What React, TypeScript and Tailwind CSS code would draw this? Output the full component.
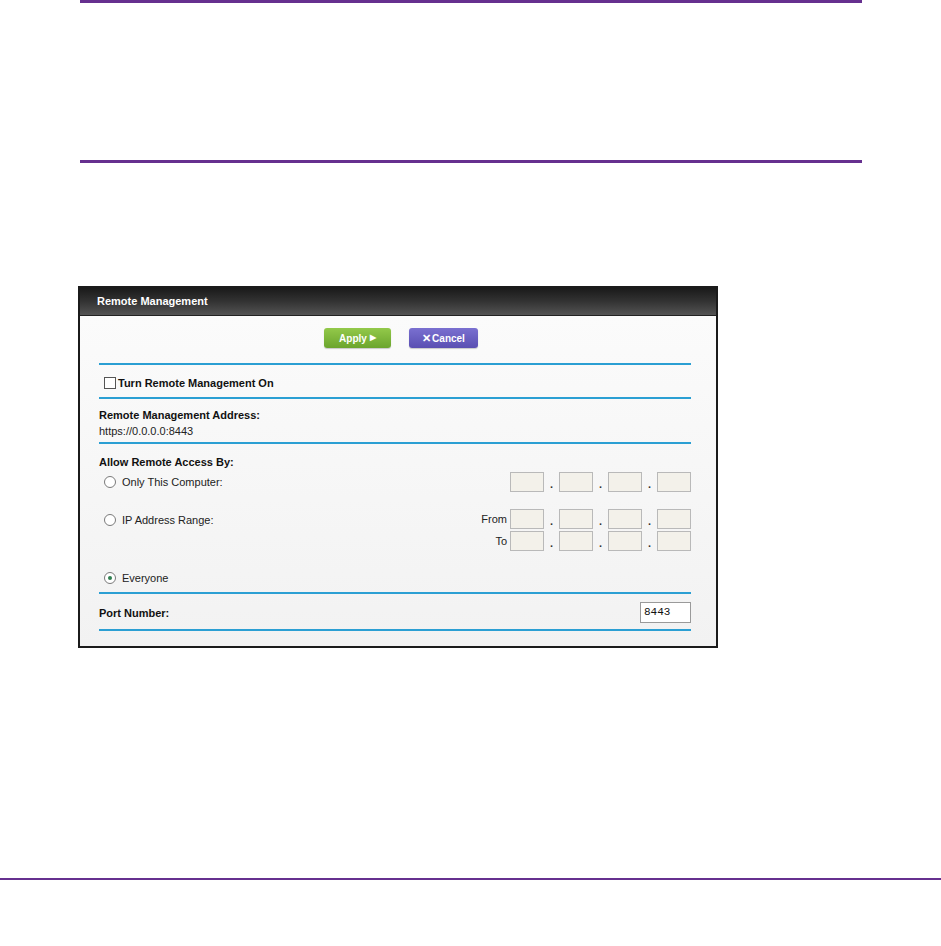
import React from 'react';

const font = { fontFamily: '"Liberation Sans", Arial, sans-serif' };

function Rule() {
  return <div className="h-[2px] bg-[#2b9fd3]" />;
}

function Radio({ checked }: { checked?: boolean }) {
  return (
    <span className="flex h-[12px] w-[12px] items-center justify-center rounded-full border border-[#7a7a7a] bg-white">
      {checked && <span className="h-[4px] w-[4px] rounded-full bg-[#2f7f4f]" />}
    </span>
  );
}

function IpBox() {
  return <div className="h-[20px] w-[34px] border border-[#b9b9b9] bg-[#f3f1ea]" />;
}

function IpRow() {
  return (
    <div className="flex items-center">
      <IpBox />
      <span className="w-[15px] pt-[4px] text-center text-[11px] font-bold leading-none text-[#333]">.</span>
      <IpBox />
      <span className="w-[15px] pt-[4px] text-center text-[11px] font-bold leading-none text-[#333]">.</span>
      <IpBox />
      <span className="w-[15px] pt-[4px] text-center text-[11px] font-bold leading-none text-[#333]">.</span>
      <IpBox />
    </div>
  );
}

export default function App() {
  return (
    <div className="h-[946px] w-[941px] overflow-hidden bg-white" style={font}>
      <div className="ml-[80px] h-[3px] w-[782px] bg-[#66308f]" />
      <div className="ml-[80px] mt-[157px] h-[3px] w-[782px] bg-[#66308f]" />

      <div className="ml-[78px] mt-[123px] flex h-[362px] w-[640px] flex-col border-2 border-[#1b1b1b] bg-[#f6f6f6]">
        <div className="flex h-[28px] items-center bg-gradient-to-b from-[#1a1a1a] via-[#333] to-[#545454] pl-[17px] border-b border-[#222]">
          <span className="text-[11px] font-bold text-white">Remote Management</span>
        </div>

        <div className="flex flex-1 flex-col bg-gradient-to-b from-[#fbfbfb] to-[#f2f2f2] pl-[19px] pr-[25px]">
          <div className="flex h-[47px] items-start justify-center gap-[18px] pt-[12px] pl-[12px]">
            <div className="flex h-[20px] w-[67px] items-center justify-center rounded-[3px] bg-gradient-to-b from-[#93c94a] to-[#6ba52d] text-[10px] font-bold text-white shadow-[0_1px_1px_rgba(0,0,0,0.2)]">
              Apply <span className="ml-[3px] text-[8px]">▶</span>
            </div>
            <div className="flex h-[20px] w-[69px] items-center justify-center rounded-[3px] bg-gradient-to-b from-[#7a70d0] to-[#5a4fb2] text-[10px] font-bold text-white shadow-[0_1px_1px_rgba(0,0,0,0.2)]">
              <span className="mr-[1px] text-[11px]">✕</span>Cancel
            </div>
          </div>
          <Rule />

          <div className="flex h-[32px] items-center pl-[5px] pt-[4px]">
            <span className="h-[12px] w-[12px] border border-[#555] bg-white" />
            <span className="ml-[2px] text-[11px] font-bold text-[#111]">Turn Remote Management On</span>
          </div>
          <Rule />

          <div className="flex h-[43px] flex-col justify-center pt-[5px]">
            <span className="text-[11px] font-bold leading-[16px] text-[#111]">Remote Management Address:</span>
            <span className="text-[11px] leading-[16px] text-[#222]">https://0.0.0.0:8443</span>
          </div>
          <Rule />

          <div className="flex h-[148px] flex-col pt-[11px]">
            <span className="text-[11px] font-bold leading-[14px] text-[#111]">Allow Remote Access By:</span>
            <div className="mt-[2px] flex h-[22px] items-center justify-between">
              <div className="flex items-center gap-[6px] pl-[5px]">
                <Radio />
                <span className="text-[11px] text-[#222]">Only This Computer:</span>
              </div>
              <IpRow />
            </div>
            <div className="mt-[16px] flex items-start justify-between">
              <div className="flex h-[22px] items-center gap-[6px] pl-[5px]">
                <Radio />
                <span className="text-[11px] text-[#222]">IP Address Range:</span>
              </div>
              <div className="flex flex-col items-end gap-[2px]">
                <div className="flex items-center">
                  <span className="mr-[3px] text-[11px] text-[#222]">From</span>
                  <IpRow />
                </div>
                <div className="flex items-center">
                  <span className="mr-[3px] text-[11px] text-[#222]">To</span>
                  <IpRow />
                </div>
              </div>
            </div>
            <div className="mt-[16px] flex h-[22px] items-center gap-[6px] pl-[5px]">
              <Radio checked />
              <span className="text-[11px] text-[#222]">Everyone</span>
            </div>
          </div>
          <Rule />

          <div className="flex h-[35px] items-center justify-between pt-[2px]">
            <span className="pt-[2px] text-[11px] font-bold text-[#111]">Port Number:</span>
            <div className="flex h-[21px] w-[51px] items-center border border-[#9a9a9a] bg-white pl-[3px] text-[11px] text-[#111]" style={{ fontFamily: '"Liberation Mono", monospace' }}>
              8443
            </div>
          </div>
          <Rule />
        </div>
      </div>

      <div className="mt-[230px] h-[2px] w-full bg-[#66308f]" />
    </div>
  );
}
